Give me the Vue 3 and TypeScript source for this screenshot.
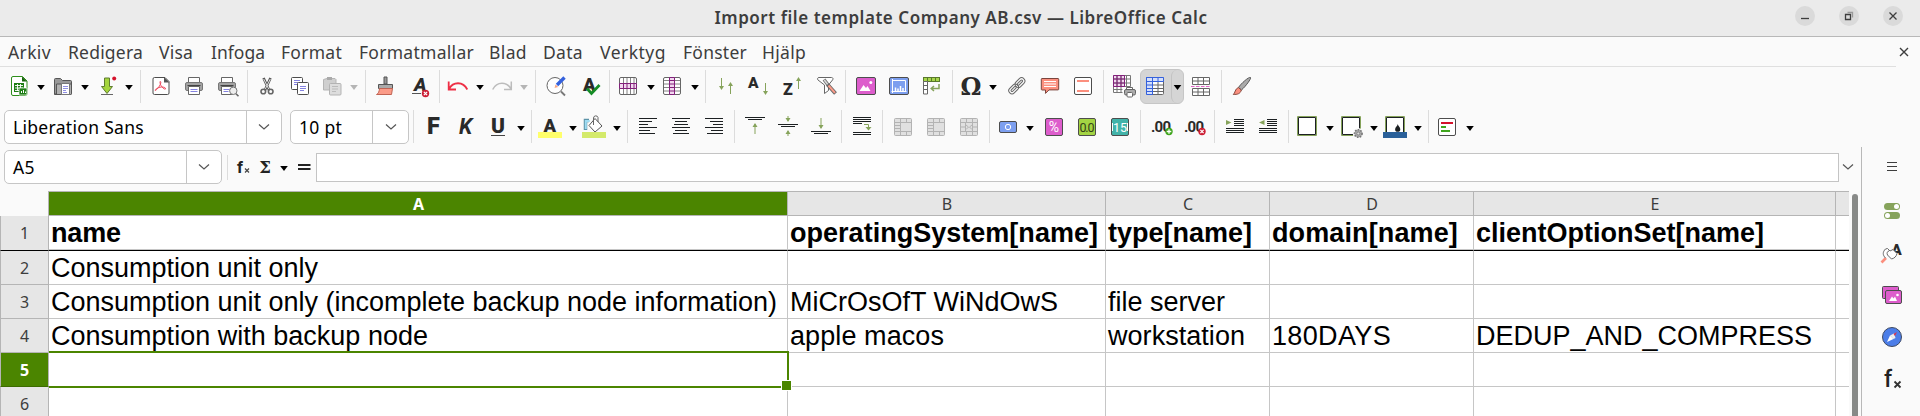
<script setup lang="ts">
import type { Directive } from 'vue'

interface Tool { icon: string; x: number }
interface Placed { icon: string; kind: string; gap: number; width: number }

/* Letter-spaces a label so that it fills the given width. */
const vFit: Directive<HTMLElement, number> = {
  mounted(el, { value }) {
    const length = (el.textContent ?? '').length
    const natural = el.getBoundingClientRect().width
    el.style.letterSpacing = `${(value - natural) / length}px`
  },
}

const ink = '#4d4d4d'
const olive = '#86a35b'
const lines = (rows: number[][], color = '#1c2022') =>
  `<path fill="none" stroke="${color}" stroke-width="1" d="${rows.map(([x1, x2, y]) => `M${x1} ${y}H${x2}`).join('')}"/>`
const badge = (cross: boolean, x: number, y: number) =>
  `<circle cx="${x}" cy="${y}" r="3.7" fill="${cross ? '#cc1f36' : '#3fa51d'}"/><path stroke="#fff" stroke-width="1.3" d="${cross ? `M${x - 1.6} ${y - 1.6}l3.2 3.2m0-3.2l-3.2 3.2` : `M${x - 2.3} ${y}h4.6M${x} ${y - 2.3}v4.6`}"/>`
const box = (fill: string, stroke = ink, x = 3.5, w = 17) =>
  `<rect x="${x}" y="3.5" width="${w}" height="17" rx="1.5" fill="${fill}" stroke="${stroke}"/>`
const letter = (t: string, x: number, y: number, size: number, extra = '') =>
  `<text x="${x}" y="${y}" font-family="Roboto, sans-serif" font-size="${size}" font-weight="900" fill="#2a2a2a" ${extra}>${t}</text>`
const up = (x: number, top: number, bottom: number) =>
  `<path d="M${x} ${bottom}V${top + 1}" stroke="${olive}"/><path d="M${x - 2.5} ${top + 4}L${x} ${top}l2.5 4z" fill="${olive}"/>`
const down = (x: number, top: number, bottom: number) =>
  `<path d="M${x} ${top}V${bottom - 1}" stroke="${olive}"/><path d="M${x - 2.5} ${bottom - 4}L${x} ${bottom}l2.5-4z" fill="${olive}"/>`
const merged = (inner: string) =>
  `<rect x="3.5" y="3.5" width="17" height="17" rx="1" fill="#e0e0e0" stroke="#b3b3b3"/><path fill="none" stroke="#b3b3b3" d="M3 7.5h18M3 16.5h18M9.500 3v4.500M15.500 3v4.500M9.500 16.500V21M15.500 16.500V21${inner}"/>`

const icons: Record<string, string> = {
  new: `<path d="M6 2.500h9.500l4.500 4.500v13a1.500 1.500 0 0 1-1.500 1.500H6A1.500 1.500 0 0 1 4.500 20V4A1.500 1.500 0 0 1 6 2.500z" fill="#fff" stroke="#2f8f1d"/><path d="M15 2.500l5 5h-5z" fill="#17640c"/><path d="M7 9h10v9H7z" fill="#1c7d12"/><path d="M8 11.500h8M8 14h8M8 16.500h4M10.500 10v7M13.500 10v4" stroke="#fff" stroke-width=".9"/><path d="M12 14h8v7h-8z" fill="#1c7d12" stroke="#fff" stroke-width=".7"/><path d="M14.500 19v-2M16.500 19v-3M18.500 19v-1.500" stroke="#fff"/>`,
  open: `<path d="M3.500 20V5.500a1 1 0 0 1 1-1h5l2 2h8a1 1 0 0 1 1 1V20z" fill="#989898" stroke="#555"/><path d="M5.500 20.500V10h15v9.500a1 1 0 0 1-1 1H3.500z" fill="#b0b0b0" stroke="#555"/><path d="M10.500 9.500h8v11h-8z" fill="#fff" stroke="#777"/><path d="M12 12.500h5M12 14.500h5M12 16.500h3M12 18.500h4" stroke="#8583e0" stroke-width=".9"/>`,
  save: `<path d="M9.500 4h5v8.500h3L12 19.500l-5.500-7h3z" fill="#a4d53c" stroke="#5f7c30"/><path d="M6 20.500h12" stroke="#666"/><circle cx="19.200" cy="4.500" r="2" fill="#d5122c"/>`,
  pdf: `<path d="M5.500 3.500H16l4 4V19a1.500 1.500 0 0 1-1.500 1.500h-13A1.500 1.500 0 0 1 4 19V5a1.500 1.500 0 0 1 1.500-1.500z" fill="#fff" stroke="${ink}"/><path d="M15 3l5.500 5.500H15z" fill="#555"/><path d="M11 7.500c2.500 0-1 6.500-4.500 9-1.500 0 1-3 6-3.500 3 0 4.500 1 4 2-1.500 1-6-4-5.500-7.500z" fill="none" stroke="#ef4b5f"/>`,
  print: `<path d="M6.500 3.500h11v5h-11z" fill="#fff" stroke="#666"/><rect x="3.500" y="8.500" width="17" height="8" rx="1.500" fill="#a3a3a3" stroke="#777"/><path d="M5.500 11.500h13" stroke="#444"/><path d="M6.500 12.500h11v8h-11z" fill="#fff" stroke="#666"/><path d="M8.500 15.500h7M8.500 17.500h7" stroke="#8583e0"/>`,
  preview: `<path d="M5.500 3.500h11v5h-11z" fill="#fff" stroke="#666"/><rect x="2.500" y="8.500" width="17" height="8" rx="1.500" fill="#a3a3a3" stroke="#777"/><path d="M4.500 11.500h13" stroke="#444"/><path d="M5.500 12.500h11v8h-11z" fill="#fff" stroke="#666"/><path d="M7.500 15.500h6M7.500 17.500h5" stroke="#8583e0"/><circle cx="17.300" cy="16.800" r="3.700" fill="#eee" stroke="#777"/><path d="M20 19.700l2.500 2.500" stroke="#666" stroke-width="1.600"/>`,
  cut: `<path d="M8.500 4l5.500 12M15.500 4L10 16" stroke="#555" stroke-width="2.600"/><path d="M8.700 5l5 10M15.300 5l-5 10" stroke="#ddd"/><circle cx="8.300" cy="17.500" r="2.300" fill="none" stroke="#666" stroke-width="1.600"/><circle cx="15.700" cy="17.500" r="2.300" fill="none" stroke="#666" stroke-width="1.600"/>`,
  copy: `<rect x="3.500" y="3.500" width="11" height="12" rx="1" fill="#fff" stroke="${ink}"/><path d="M6 6.500h6M6 8.500h4M6 10.500h3" stroke="#8583e0"/><rect x="9.500" y="8.500" width="11" height="12" rx="1" fill="#fff" stroke="${ink}"/><path d="M12 12.500h6M12 14.500h6M12 16.500h4" stroke="#8583e0"/>`,
  paste: `<path d="M7 4.500h8l1 1V16H3.500V5.500z" fill="#cfcfcf" stroke="#b5b5b5"/><path d="M7 3h5v3H7z" fill="#aaa"/><rect x="9.500" y="9.500" width="11.500" height="11.500" rx="1" fill="#ddd" stroke="#b3b3b3"/><path d="M12 12.500h6M12 15h6M12 17.500h4" stroke="#bbb"/>`,
  clone: `<path d="M11 3h3v7h-3z" fill="#999" stroke="#555"/><path d="M5.500 10.500h14v4h-14z" fill="#aaa" stroke="#555"/><path d="M6.500 14.500h13l-1 6h-15c2-1 2.700-3 3-6z" fill="#fb9b88" stroke="#c06454"/>`,
  clear: `<text x="6" y="17" font-family="Roboto, sans-serif" font-size="19" font-weight="900" font-style="italic" fill="#2a2a2a">A</text><path d="M4 19.500h9" stroke="#555"/>${badge(true, 17.500, 19.500)}`,
  undo: `<path d="M3 15C7 7.500 17 7 21.300 15.500M2.700 7.500V15.500H10" fill="none" stroke="#ee2f45" stroke-width="1.800"/>`,
  redo: `<path d="M21 15C17 7.500 7 7 2.700 15.500M21.300 7.500V15.500H14" fill="none" stroke="#bcbcbc" stroke-width="1.500"/>`,
  find: `<circle cx="11" cy="11.500" r="8" fill="#fff" stroke="#666"/><path d="M17 17.500l4 4" stroke="#777" stroke-width="1.800"/><path d="M13 11l7.500-7.500" stroke="#3561dc" stroke-width="3.400"/><path d="M10.500 14l1-3.500 2.700 2.500z" fill="#f7a583"/>`,
  spell: `${letter('A', 4, 17, 18.500)}<path d="M8 14.500l4.500 5 8-8.500" fill="none" stroke="#158c26" stroke-width="2.800"/>`,
  rows: `<rect x="3.500" y="3.500" width="17" height="17" rx="1.500" fill="#fff" stroke="#666"/><path d="M7.500 4v16M11 4v16M14.500 4v16M18 4v16" stroke="#777" stroke-width=".9"/><path d="M3.500 9.500h17v5h-17z" fill="#f2d8ef" stroke="#82207b"/><path d="M7.500 9.500v5M11 9.500v5M14.500 9.500v5M18 9.500v5" stroke="#82207b"/>`,
  cols: `<rect x="3.500" y="3.500" width="17" height="17" rx="1.500" fill="#fff" stroke="#666"/><path d="M4 6.500h16M4 10h16M4 13.500h16M4 17h16" stroke="#777" stroke-width=".9"/><path d="M9.500 3.500h5v17h-5z" fill="#f2d8ef" stroke="#82207b"/><path d="M9.500 6.500h5M9.500 10h5M9.500 13.500h5M9.500 17h5" stroke="#82207b"/>`,
  sort: down(7.5, 4, 16) + up(16.5, 8, 20),
  asc: letter('A', 1, 14, 15.5) + down(18.5, 9, 21),
  desc: letter('Z', 3, 21, 16) + up(18.5, 3, 15),
  filter: `<path d="M4 3.500h12.500c1.500 0 2 1.500 1 2.500l-4 5v5.500l-4 3V11L3 6c-1-1-.5-2.500 1-2.500z" fill="#fff" stroke="#666"/><path d="M9 5.500l4.500 6" stroke="#777" stroke-width="3.400"/><path d="M9.300 6l4.200 5.500" stroke="#ddd" stroke-width="1.400"/><path d="M12.500 10.500l8 9" stroke="#666" stroke-width="3.800"/><path d="M13.500 11.500l6.500 7.300" stroke="#fb9b88" stroke-width="2"/>`,
  image: `${box('#dd5dcc', ink, 2.5, 19)}<path d="M5.500 17l4-6 2.500 3 1.500-2 3 5z" fill="#fff"/><circle cx="16.800" cy="8.500" r="1.500" fill="#fff"/>`,
  chart: `${box('#7d9fef', ink, 2.5, 19)}<path d="M5.500 5v14M5 6.500h13.500V17.500M4.500 17.500h15" fill="none" stroke="#fff"/><path d="M8.500 17v-3.500M11 17v-2.500M13.500 17v-5M16 17v-3" stroke="#fff" stroke-width="1.500"/>`,
  pivot: `<rect x="4.500" y="3.500" width="16" height="4" fill="#a6d64a" stroke="#59782b"/><path d="M8.500 3.500v4M12.500 3.500v4M16.500 3.500v4" stroke="#59782b"/><path d="M4.500 7.500h4v12.500h-4zM4.500 11.500h4M4.500 15.500h4" fill="#fff" stroke="#666"/><path d="M20 10v4.500h-7M15 12l-2.800 2.500L15 17" fill="none" stroke="${olive}" stroke-width="1.500"/>`,
  omega: `<text x="12" y="20.500" text-anchor="middle" font-family="DejaVu Serif, serif" font-size="23.500" font-weight="700" fill="#2a2a2a">Ω</text>`,
  link: `<g fill="none" stroke="#666" transform="rotate(-45 12 12)"><rect x="2" y="8.500" width="11" height="6.500" rx="3.200"/><rect x="4.300" y="10.700" width="6.500" height="2" rx="1"/><rect x="11" y="8.500" width="11" height="6.500" rx="3.200"/><rect x="13.300" y="10.700" width="6.500" height="2" rx="1"/></g>`,
  comment: `<path d="M4 4.500h16a.7.7 0 0 1 .7.700v10a.7.700 0 0 1-.7.700H11l-3.500 3.500V16H4a.7.700 0 0 1-.7-.7V5.200a.7.700 0 0 1 .7-.7z" fill="#fb8f7e" stroke="#7a453d"/><path d="M6 7.500h12M6 10h12M6 12.500h12" stroke="#fff"/>`,
  header: `${box('#fff')}<path d="M6 7h12M6 17h12" stroke="#fb8f7e" stroke-width="2"/>`,
  range: `<path d="M1.500 1.500h17v17h-17z" fill="#fff"/><path d="M1.500 1.500h11v11h-11z" fill="#f2d8ef"/><path d="M1.500 1.500h17v11h-17M1.500 12.500v6h9M1.500 5h17M1.500 9h17M1.500 15.500h9M5 1.500v17M9 1.500v17M14.500 1.500v11" fill="none" stroke="#777"/><path d="M1.500 1.500h11v11h-11zM1.500 5h11M1.500 9h11M5 1.500v11M9 1.500v11" fill="none" stroke="#82207b"/><path d="M14.500 13.500h6v4h-6z" fill="#fff" stroke="#666"/><rect x="12.500" y="15.500" width="11" height="5.500" rx="1.500" fill="#aaa" stroke="#666"/><rect x="15" y="18.500" width="5.500" height="4.500" rx="1" fill="#fff" stroke="#666"/>`,
  freeze: `<rect x="3.500" y="3.500" width="17" height="17" rx="1" fill="#fff" stroke="#666"/><path d="M3.500 3.500h17v4h-11v13h-6z" fill="#d4dffb"/><path d="M9.500 8v13M15 8v13M9 11h12M9 14.500h12M9 17.500h12" stroke="#666"/><path d="M3.500 3.500h17v4h-17zM3.500 3.500h6v17h-6zM3.500 11h6M3.500 14.500h6M3.500 17.500h6M15 3.500v4" fill="none" stroke="#3561dc"/>`,
  split: `<path d="M3.500 3.500h17v7h-17zM3.500 7h17M9 3.500v7M14.500 3.500v7M3.500 14.500h17v7h-17zM3.500 18h17M9 14.500v7M14.500 14.500v7" fill="#fff" stroke="#666"/><path d="M2 12.500h20" stroke="#e465ca" stroke-dasharray="3.500 1.500"/>`,
  draw: `<path d="M20.500 3.500c1 1-5 9-9 12.500l-3-2.500C11 9.500 19 2.500 20.500 3.500z" fill="#aaa" stroke="#555"/><path d="M8.300 13.500l3 2.500c-1 4-4 4.500-8 4.500 2-1.500 1.500-5.500 5-7z" fill="#fb8f7e" stroke="#8a4c42"/>`,
  bold: letter('F', 6, 19, 23.5),
  italic: letter('K', 5, 19, 21.5, 'font-style="italic"').replace('"900"', '"700"'),
  underline: letter('U', 5, 17.5, 21) + '<path d="M5 20.500h14" stroke="#444"/>',
  fontcolor: letter('A', 5.5, 16.5, 18.5) + '<path d="M0 17h24v6H0z" fill="#ffff6b"/>',
  bucket: `<path d="M3.500 15V5.500H7" fill="none" stroke="#5c93a8" stroke-width="3.500"/><path d="M3.800 14V6h4" fill="none" stroke="#9fdcf2" stroke-width="2"/><path d="M13 3.500l7 7.500-7 6-6-6.500z" fill="#fff" stroke="#555"/><path d="M11.500 10V3a2.300 2.300 0 0 1 4.500-.5V7" fill="none" stroke="#666"/><path d="M0 17h24v6H0z" fill="#d4ea6b"/>`,
  left: lines([[3, 21, 3.5], [3, 16, 6.5], [3, 12, 9.5], [3, 21, 12.5], [3, 14, 15.5], [3, 19, 18.5]]),
  center: lines([[3, 21, 3.5], [6, 18, 6.5], [5, 19, 9.5], [3, 21, 12.5], [6, 18, 15.5], [4, 20, 18.5]]),
  right: lines([[3, 21, 3.5], [8, 21, 6.5], [11, 21, 9.5], [3, 21, 12.5], [9, 21, 15.5], [5, 21, 18.5]]),
  top: lines([[2, 22, 2.5], [5, 19, 4.5]]) + up(12, 8, 19),
  middle: down(12, 1, 7) + lines([[2, 22, 9.5], [5, 19, 11.5]]) + up(12, 15, 21),
  bottom: down(12, 3, 14) + lines([[2, 22, 16.5], [5, 19, 18.5]]),
  wrap: lines([[3, 21, 2.5], [3, 21, 4.5], [3, 21, 6.5], [3, 12, 8.5], [3, 21, 17.5], [3, 21, 19.5]]) + `<path d="M14 9.500h4.500V14" fill="none" stroke="${olive}"/><path d="M15.500 12h6L18.500 15.500z" fill="${olive}"/>`,
  merge1: merged('M9.500 7v10M3 10.500h6M3 13.500h6'),
  merge2: merged('M9.500 7v10M3 10.500h6M3 13.500h6'),
  merge3: merged('M3 12h5M16 12h5M8.500 7.500v9M15.500 7.500v9M9 10l2.500 2L9 14.500M15 10l-2.500 2 2.500 2.500'),
  currency: `<rect x="3.500" y="6.500" width="17" height="11" rx="1.500" fill="#7d9fef" stroke="${ink}"/><circle cx="12" cy="12" r="2.700" fill="none" stroke="#fff"/>`,
  percent: `${box('#dd5dcc')}<text x="12" y="17" text-anchor="middle" font-family="Roboto, sans-serif" font-size="14" fill="#fff">%</text>`,
  number: `${box('#a3d443')}<text x="12" y="16.500" text-anchor="middle" font-family="Roboto, sans-serif" font-size="12.500" textLength="15" fill="#334018">0.0</text>`,
  date: `${box('#42b3a9')}<text x="12" y="16.500" text-anchor="middle" font-family="Roboto, sans-serif" font-size="12.500" fill="#fff">15</text><path d="M4.500 8v8M19.500 8v8" stroke="#fff"/>`,
  addDecimal: `<text x="2" y="16.500" font-family="Roboto, sans-serif" font-size="15" font-weight="700" textLength="20" fill="#2a2a2a">.00</text>${badge(false, 20, 16.5)}`,
  delDecimal: `<text x="2" y="16.500" font-family="Roboto, sans-serif" font-size="15" font-weight="700" textLength="20" fill="#2a2a2a">.00</text>${badge(true, 20, 16.5)}`,
  indent: lines([[11, 21, 4.5], [11, 21, 6.5], [11, 21, 8.5], [11, 21, 10.5], [3, 21, 13.5], [3, 21, 15.5], [3, 21, 17.5]]) + `<path d="M3 5l5.500 2.500L3 10z" fill="${olive}"/>`,
  outdent: lines([[11, 21, 4.5], [11, 21, 6.5], [11, 21, 8.5], [11, 21, 10.5], [3, 21, 13.5], [3, 21, 15.5], [3, 21, 17.5]]) + `<path d="M8.500 5L3 7.500 8.500 10z" fill="${olive}"/>`,
  border: `<path d="M2.500 1.500h19v19h-19z" fill="#fff" stroke="${olive}"/><path d="M3.500 2.500h17v17h-17z" fill="none" stroke="#1c2022"/>`,
  borderStyle: `<path d="M2.500 1.500h19v19h-19z" fill="#fff" stroke="${olive}"/><path d="M3.500 2.500h17v17h-17z" fill="none" stroke="#1c2022"/><circle cx="19.300" cy="18.500" r="5.500" fill="#fafafa"/><circle cx="19.300" cy="18.500" r="3.800" fill="#aaa" stroke="#777" stroke-dasharray="1.600 1.200" stroke-width="1.600"/><circle cx="19.300" cy="18.500" r="1.500" fill="#ddd" stroke="#777" stroke-width=".8"/>`,
  borderColor: `<path d="M2.500 1.500h19v19h-19z" fill="#fff" stroke="${olive}"/><path d="M3.500 2.500h17v17h-17z" fill="none" stroke="#1c2022"/><path d="M14.800 9c0 2 2.500 3 2.500 5.200a2.600 2.600 0 0 1-5.200 0C12.100 12 14.800 11 14.800 9z" fill="#1c2022"/><path d="M0 17h24v6H0z" fill="#2a6099"/>`,
  conditional: `${box('#fff')}<path d="M6 8h12" stroke="#d5122c" stroke-width="2"/><path d="M6 12h5M6 16h9" stroke="#3fa51d" stroke-width="2"/>`,
  fx: `<text x="6" y="18" font-family="Roboto, sans-serif" font-size="16.500" font-weight="700" fill="#222">f</text><path d="M14 13.500l4 4m0-4l-4 4" stroke="#444" stroke-width="1.200"/>`,
  sum: `<text x="12" y="18" text-anchor="middle" font-family="DejaVu Serif, serif" font-size="16.500" font-weight="700" fill="#222">Σ</text>`,
  equals: `<path d="M6 10h12.500M6 14h12.500" stroke="#222" stroke-width="2"/>`,
  menu: `<path d="M7 7.500h10M7 11.500h10M7 15.500h10" stroke="#3d3d3d"/>`,
  toggles: `<rect x="4" y="4" width="16" height="7" rx="3.500" fill="${olive}"/><circle cx="16.500" cy="7.500" r="2.500" fill="#fff"/><rect x="4" y="13" width="16" height="7" rx="3.500" fill="${olive}"/><circle cx="7.500" cy="16.500" r="2.500" fill="#fff"/>`,
  styles: `${letter('A', 11.5, 13.5, 15)}<path d="M1.500 21.500l4.500-4.500" stroke="#fb8f7e" stroke-width="2.600"/><path d="M5.500 17c-3-3-3-6 0-9l2-.5 2.500 2.500 3-1.500 4 4c-.5 3-3 5-5.500 5.500l-4-4c-1-2 0-4 1.500-4" fill="#fff" stroke="#666"/>`,
  gallery: `<rect x="2.500" y="3.500" width="16" height="12" rx="1" fill="#dd5dcc" stroke="${ink}"/><rect x="5.500" y="7.500" width="16" height="13" rx="1.500" fill="#dd5dcc" stroke="${ink}"/><path d="M9 18l3-4.500 1.500 2 1.500-2 2 4.500z" fill="#fff"/><circle cx="17.500" cy="12" r="1.300" fill="#fff"/>`,
  navigator: `<circle cx="12" cy="12" r="9.500" fill="#4b7de8" stroke="#3f4a63"/><path d="M7 17l3-6.500 3.500 3.500z" fill="#fff"/><path d="M10 10.500l4-2 1.500 4.500-2 1z" fill="#eee"/><path d="M17 7l-3.500 2 1.500 2z" fill="#e13348"/>`,
  functions: `<text x="4" y="20" font-family="Roboto, sans-serif" font-size="23" font-weight="500" fill="#222">f</text><path d="M14.500 14.500l6 6m0-6l-6 6" stroke="#333" stroke-width="1.800"/>`,
}

const sizes: Record<string, number> = { dd: 10, off: 10, sep: 1 }

/* Turns a list of item centres into widths and gaps for a flex row. */
function arrange(start: number, spec: string): Placed[] {
  let edge = start
  return spec.trim().split(/\s+/).map((entry) => {
    const [icon, x] = entry.split(':')
    const tool: Tool = { icon, x: Number(x) }
    const width = sizes[icon] ?? 24
    const left = Math.floor(tool.x - width / 2 + 0.5)
    const gap = left - edge
    edge = left + width
    return { icon, kind: icon in sizes ? icon : 'icon', gap, width }
  })
}

const standard = arrange(0, `new:19 dd:41 open:63 dd:85 save:107 dd:129 sep:140 pdf:161 print:194 preview:228 sep:247
  cut:267 copy:300 paste:332 off:354 sep:365 clone:385 clear:420 sep:439 undo:458 dd:480 redo:502 off:524 sep:535
  find:556 spell:591 sep:609 rows:628 dd:651 cols:672 dd:695 sep:705 sort:726 asc:759 desc:792 filter:827 sep:845
  image:866 chart:899 pivot:931 sep:952 omega:971 dd:993 link:1017 comment:1050 header:1083 sep:1103 range:1124`)
const standardEnd = arrange(1184, 'split:1201 sep:1221 draw:1242')
const formatting = arrange(409, `sep:413 bold:433 italic:466 underline:498 dd:521 sep:531 fontcolor:550 dd:573 bucket:594 dd:617 sep:627
  left:648 center:681 right:714 sep:734 top:755 middle:788 bottom:821 sep:841 wrap:862 sep:882 merge1:903 merge2:936 merge3:969 sep:989
  currency:1008 dd:1030 percent:1054 number:1087 date:1120 sep:1140 addDecimal:1161 delDecimal:1194 sep:1214 indent:1235 outdent:1268 sep:1288
  border:1307 dd:1330 borderStyle:1351 dd:1374 borderColor:1395 dd:1418 sep:1428 conditional:1447 dd:1470`)
const formula = arrange(222, 'sep:227 fx:243 sum:265 dd:284 equals:304')
const rowsOfTools = { standard, standardEnd, formatting, formula }

const menus = [
  { label: 'Arkiv', slot: 60, fit: 43 }, { label: 'Redigera', slot: 91, fit: 75 }, { label: 'Visa', slot: 52, fit: 34 },
  { label: 'Infoga', slot: 70, fit: 54 }, { label: 'Format', slot: 78, fit: 61 }, { label: 'Formatmallar', slot: 130, fit: 115 },
  { label: 'Blad', slot: 54, fit: 38 }, { label: 'Data', slot: 57, fit: 40 }, { label: 'Verktyg', slot: 83, fit: 66 },
  { label: 'Fönster', slot: 79, fit: 64 }, { label: 'Hjälp', slot: 60, fit: 44 },
]
const columns = ['A', 'B', 'C', 'D', 'E', '']
interface Cell { text: string; fit: number }
const c = (text = '', fit = 0): Cell => ({ text, fit })
const sheet: Cell[][] = [
  [c('name', 70), c('operatingSystem[name]', 308), c('type[name]', 144), c('domain[name]', 186), c('clientOptionSet[name]', 288), c()],
  [c('Consumption unit only', 267), c(), c(), c(), c(), c()],
  [c('Consumption unit only (incomplete backup node information)', 726), c('MiCrOsOfT WiNdOwS', 268), c('file server', 117), c(), c(), c()],
  [c('Consumption with backup node', 377), c('apple macos', 154), c('workstation', 137), c('180DAYS', 119), c('DEDUP_AND_COMPRESS', 336), c()],
  [c(), c(), c(), c(), c(), c()],
  [c(), c(), c(), c(), c(), c()],
]
const panels = ['menu', 'toggles', 'styles', 'gallery', 'navigator', 'functions']
</script>

<template>
  <div class="window">
    <header class="titlebar">
      <h1 v-fit="493" class="title">Import file template Company AB.csv — LibreOffice Calc</h1>
      <div class="controls">
        <button class="control"><svg viewBox="0 0 20 20"><path d="M6 12.500h8" /></svg></button>
        <button class="control"><svg viewBox="0 0 20 20"><path d="M6.500 8.500h5v5h-5z" stroke-width="1.300" /><path d="M8.500 6.500h5v5" stroke="#999" /></svg></button>
        <button class="control"><svg viewBox="0 0 20 20"><path d="M6.500 6.500l7 7M13.500 6.500l-7 7" /></svg></button>
      </div>
    </header>

    <nav class="menubar">
      <div v-for="m in menus" :key="m.label" class="menu" :style="{ width: m.slot + 'px' }">
        <span v-fit="m.fit">{{ m.label }}</span>
      </div>
      <svg class="close" viewBox="0 0 10 10"><path d="M1 1l8 8M9 1l-8 8" /></svg>
    </nav>

    <div class="toolbar">
      <template v-for="(t, i) in rowsOfTools.standard" :key="i">
        <span :class="t.kind" :style="{ marginLeft: t.gap + 'px' }"><svg v-if="t.kind === 'icon'" viewBox="0 0 24 24" v-html="icons[t.icon]" /></span>
      </template>
      <span class="pressed">
        <svg viewBox="0 0 24 24" v-html="icons.freeze" />
        <span class="pressed-arrow"><span class="dd" /></span>
      </span>
      <template v-for="(t, i) in rowsOfTools.standardEnd" :key="i">
        <span :class="t.kind" :style="{ marginLeft: t.gap + 'px' }"><svg v-if="t.kind === 'icon'" viewBox="0 0 24 24" v-html="icons[t.icon]" /></span>
      </template>
    </div>

    <div class="toolbar second">
      <div class="combo font-name"><span v-fit="131" class="value">Liberation Sans</span><span class="open"><svg viewBox="0 0 12 8"><path d="M1 1.500l5 4.500 5-4.500" /></svg></span></div>
      <div class="combo font-size"><span v-fit="43" class="value">10 pt</span><span class="open"><svg viewBox="0 0 12 8"><path d="M1 1.500l5 4.500 5-4.500" /></svg></span></div>
      <template v-for="(t, i) in rowsOfTools.formatting" :key="i">
        <span :class="t.kind" :style="{ marginLeft: t.gap + 'px' }"><svg v-if="t.kind === 'icon'" viewBox="0 0 24 24" v-html="icons[t.icon]" /></span>
      </template>
    </div>

    <div class="workspace">
      <main class="document">
        <div class="formula-bar">
          <div class="combo cell-name"><span v-fit="22" class="value">A5</span><span class="open"><svg viewBox="0 0 12 8"><path d="M1 1.500l5 4.500 5-4.500" /></svg></span></div>
          <template v-for="(t, i) in rowsOfTools.formula" :key="i">
            <span :class="t.kind" :style="{ marginLeft: t.gap + 'px' }"><svg v-if="t.kind === 'icon'" viewBox="0 0 24 24" v-html="icons[t.icon]" /></span>
          </template>
          <div class="formula-input" />
          <svg class="expand" viewBox="0 0 12 8"><path d="M1 1.500l5 4.500 5-4.500" /></svg>
        </div>
        <div class="sheet-area">
          <div class="sheet">
            <div class="line head">
              <div class="corner" />
              <div v-for="(col, i) in columns" :key="i" class="col-head" :class="{ active: i === 0 }">{{ col }}</div>
            </div>
            <div v-for="(row, r) in sheet" :key="r" class="line" :class="{ frozen: r === 0 }">
              <div class="row-head" :class="{ active: r === 4 }">{{ r + 1 }}</div>
              <div v-for="(cell, i) in row" :key="i" class="cell" :class="{ selected: r === 4 && i === 0 }">
                <span v-if="cell.text" v-fit="cell.fit">{{ cell.text }}</span>
              </div>
            </div>
          </div>
          <div class="scrollbar" />
        </div>
      </main>
      <aside class="sidebar">
        <svg v-for="p in panels" :key="p" viewBox="0 0 24 24" v-html="icons[p]" />
      </aside>
    </div>
  </div>
</template>

<style>
body { background: #fafafa; overflow: hidden; }
</style>

<style scoped>
* { box-sizing: border-box; }
.window { width: 1920px; height: 416px; overflow: hidden; display: flex; flex-direction: column; background: #fafafa; color: #3d3d3d; font: 17.5px "Noto Sans", "Open Sans", sans-serif; }
svg { display: block; flex: none; overflow: visible; }
.titlebar { height: 37px; flex: none; display: grid; grid-template-columns: 1fr auto 1fr; align-items: center; background: #ebebeb; border-bottom: 1px solid #b8b8b8; }
.title { grid-column: 2; margin: 0 0 1px 2px; font-size: 17px; line-height: 24px; font-weight: 600; white-space: nowrap; }
.controls { display: flex; gap: 24px; justify-self: end; margin: 0 17px 4px 0; }
.control { width: 20px; height: 20px; padding: 0; border: 0; border-radius: 50%; background: #dadada; }
.control svg { width: 20px; height: 20px; fill: none; stroke: #3d3d3d; stroke-width: 1.3; }
.menubar { height: 30px; flex: none; display: flex; align-items: center; padding-left: 8px; background: linear-gradient(#dfdfdf, #dfdfdf) 0 100% / 1896px 1px no-repeat; }
.menu { flex: none; white-space: nowrap; line-height: 24px; }
.close { width: 10px; height: 10px; margin: 0 11px 0 auto; stroke: #3d3d3d; stroke-width: 1.4; }
.toolbar { height: 38px; flex: none; display: flex; align-items: center; }
.second { height: 42px; padding: 2px 0 0 4px; }
.icon { width: 24px; height: 24px; flex: none; }
.icon svg { width: 24px; height: 24px; }
.sep { width: 1px; height: 33px; flex: none; margin-top: 1px; background: #dcdcdc; }
.second .sep { margin-top: -1px; }
.dd, .off { width: 10px; height: 5px; flex: none; margin-top: 3px; background: #000; clip-path: polygon(12% 0, 88% 0, 50% 100%); }
.off { background: #b5b5b5; }
.pressed { width: 44px; height: 35px; flex: none; margin: 1px 0 0 4px; padding: 0 0 1px 2px; display: flex; align-items: center; background: #d5d5d5; border: 1px solid #c6c6c6; border-radius: 6px; }
.pressed > svg { width: 24px; height: 24px; }
.pressed-arrow { height: 33px; width: 12px; margin-left: auto; display: flex; align-items: center; justify-content: center; border-left: 1px solid #c3c3c3; border-radius: 6px; }
.combo { height: 34px; flex: none; display: flex; align-items: center; background: #fff; border: 1px solid #c6c6c6; border-radius: 5px; color: #000; }
.value { margin-left: 8px; white-space: nowrap; }
.open { width: 36px; height: 32px; margin-left: auto; display: flex; align-items: center; justify-content: center; border-left: 1px solid #c6c6c6; }
.open svg, .expand { width: 12px; height: 8px; fill: none; stroke: #555; stroke-width: 1.2; }
.font-name { width: 278px; }
.font-name .open, .cell-name .open { width: 35px; }
.font-size { width: 119px; margin-left: 8px; }
.cell-name { width: 218px; margin-left: 4px; }
.workspace { flex: 1; min-height: 0; display: flex; }
.document { width: 1861px; display: flex; flex-direction: column; }
.formula-bar { height: 44px; flex: none; display: flex; align-items: center; padding-bottom: 4px; }
.formula-bar .sep { height: 25px; }
.formula-input { flex: 1; height: 29px; margin-top: 1px; background: #fff; border: 1px solid #c4c4c4; }
.expand { margin: 0 7px 0 3px; }
.sheet-area { flex: 1; min-height: 0; display: flex; overflow: hidden; }
.sheet { width: 1849px; flex: none; }
.line { height: 34px; display: grid; grid-template-columns: 49px 739px 318px 164px 204px 362px 13px; grid-template-rows: 100%; }
.head { height: 25px; }
.col-head { border: solid #b5b5b5; border-width: 1px 1px 1px 0; background: #e6e6e6; padding-left: 1px; font-size: 16px; line-height: 24px; text-align: center; }
.col-head:last-child, .cell:last-child { border-right: 0; }
.col-head.active, .row-head.active { background: #4b8500; color: #fff; font-weight: 700; }
.corner { border-right: 1px solid #b5b5b5; }
.row-head { border: solid #b5b5b5; border-width: 0 1px 1px 1px; background: #e6e6e6; font-size: 16px; line-height: 35px; text-align: center; }
.row-head.active { border-bottom-color: #3c6b00; }
.cell { position: relative; background: #fff; border: solid #c6c6c6; border-width: 0 1px 1px 0; padding-left: 2px; color: #000; font: 27px/35px "Liberation Sans", Arial, sans-serif; white-space: nowrap; }
.frozen { height: 35px; }
.frozen .cell, .frozen .row-head { border-bottom-color: #000; }
.frozen .cell { font-weight: 700; box-shadow: inset 0 -1px #c6c6c6; }
.selected::before { content: ""; position: absolute; inset: -2px -2px -2px 0; border: 2px solid #4b8500; border-left: 0; z-index: 1; }
.selected::after { content: ""; position: absolute; right: -5px; bottom: -5px; width: 9px; height: 9px; border: 1px solid #fff; background: #4b8500; z-index: 2; }
.scrollbar { width: 6px; margin: 3px 0 0 3px; border-radius: 3px 3px 0 0; background: #888a88; }
.sidebar { width: 59px; border-left: 1px solid #b8b8b8; display: flex; flex-direction: column; align-items: center; gap: 18px; padding: 8px 0 0 2px; }
.sidebar svg { width: 24px; height: 24px; }
.sidebar svg:first-child { margin-bottom: 2px; }
</style>
